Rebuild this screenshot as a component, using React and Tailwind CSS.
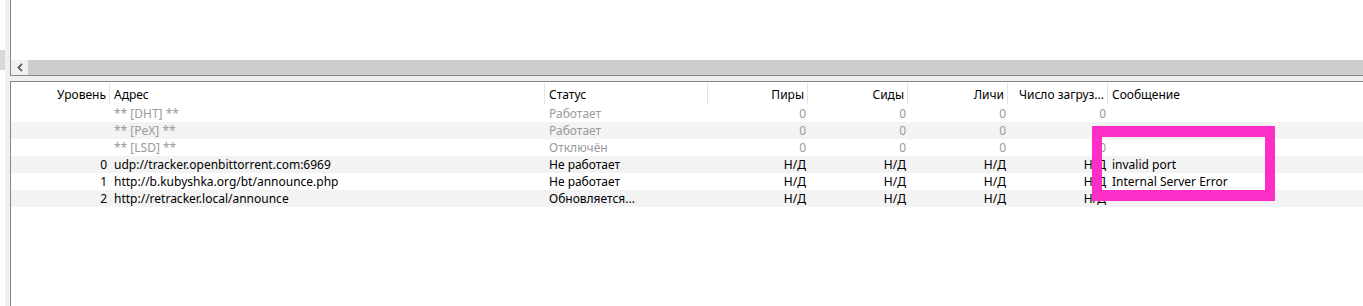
import React from "react";

const cols = "grid grid-cols-[99px_435px_163px_100px_100px_100px_100px_1fr]";

const rows = [
  { level: "", url: "** [DHT] **", status: "Работает", peers: "0", seeds: "0", leech: "0", dl: "0", msg: "", off: true },
  { level: "", url: "** [PeX] **", status: "Работает", peers: "0", seeds: "0", leech: "0", dl: "0", msg: "", off: true },
  { level: "", url: "** [LSD] **", status: "Отключён", peers: "0", seeds: "0", leech: "0", dl: "0", msg: "", off: true },
  { level: "0", url: "udp://tracker.openbittorrent.com:6969", status: "Не работает", peers: "Н/Д", seeds: "Н/Д", leech: "Н/Д", dl: "Н/Д", msg: "invalid port" },
  { level: "1", url: "http://b.kubyshka.org/bt/announce.php", status: "Не работает", peers: "Н/Д", seeds: "Н/Д", leech: "Н/Д", dl: "Н/Д", msg: "Internal Server Error" },
  { level: "2", url: "http://retracker.local/announce", status: "Обновляется...", peers: "Н/Д", seeds: "Н/Д", leech: "Н/Д", dl: "Н/Д", msg: "" },
];

const HeadCell = ({ children, right }) => (
  <div
    className={`h-[21px] mt-[1px] pt-[2px] flex items-center border-r border-[#e5e5e5] whitespace-nowrap overflow-hidden ${
      right ? "justify-end pr-[3px]" : "pl-[4px]"
    }`}
  >
    {children}
  </div>
);

export default function App() {
  return (
    <div className="relative w-[1363px] h-[306px] bg-white flex overflow-hidden font-['Segoe_UI','Noto_Sans',sans-serif] text-[12px] text-black">
      {/* left edge */}
      <div className="w-[5px] flex flex-col">
        <div className="h-[50px]" />
        <div className="h-[20px] bg-[#d9d9d9]" />
      </div>
      <div className="w-[5px] bg-[#f0f0f0]" />

      <div className="flex-1 flex flex-col min-w-0">
        {/* top panel */}
        <div className="h-[76px] border-l border-b border-[#828790] flex flex-col">
          <div className="flex-1 bg-white" />
          <div className="h-[15px] flex">
            <div className="w-[17px] bg-[#f0f0f0] flex items-center justify-center">
              <svg width="6" height="9" viewBox="0 0 6 9">
                <path d="M5 0.8 L1.4 4.5 L5 8.2" fill="none" stroke="#606060" strokeWidth="1.8" />
              </svg>
            </div>
            <div className="flex-1 bg-[#cdcdcd]" />
          </div>
        </div>

        {/* splitter */}
        <div className="h-[5px] bg-[#f0f0f0]" />

        {/* tracker list */}
        <div className="flex-1 border-l border-t border-[#828790] bg-white">
          <div className={`${cols} h-[23px] items-start`}>
            <HeadCell right>Уровень</HeadCell>
            <HeadCell>Адрес</HeadCell>
            <HeadCell>Статус</HeadCell>
            <HeadCell right>Пиры</HeadCell>
            <HeadCell right>Сиды</HeadCell>
            <HeadCell right>Личи</HeadCell>
            <HeadCell right>Число загруз...</HeadCell>
            <div className="h-[21px] mt-[1px] pt-[2px] flex items-center pl-[4px]">Сообщение</div>
          </div>
          {rows.map((r, i) => (
            <div
              key={i}
              className={`${cols} h-[17px] pt-[1px] leading-[16px] whitespace-nowrap ${
                i % 2 ? "bg-[#f3f3f3]" : "bg-white"
              } ${r.off ? "text-[#9a9a9a]" : "text-black"}`}
            >
              <div className="text-right pr-[3px]">{r.level}</div>
              <div className="pl-[4px]">{r.url}</div>
              <div className="pl-[4px]">{r.status}</div>
              <div className="text-right pr-[2px]">{r.peers}</div>
              <div className="text-right pr-[2px]">{r.seeds}</div>
              <div className="text-right pr-[2px]">{r.leech}</div>
              <div className="text-right pr-[2px]">{r.dl}</div>
              <div className="pl-[4px]">{r.msg}</div>
            </div>
          ))}
        </div>
      </div>

      {/* annotation */}
      <div className="absolute left-[1092px] top-[126px] w-[183px] h-[75px] border-[#fd2ec8] border-x-[10px] border-y-[11px]" />
    </div>
  );
}
